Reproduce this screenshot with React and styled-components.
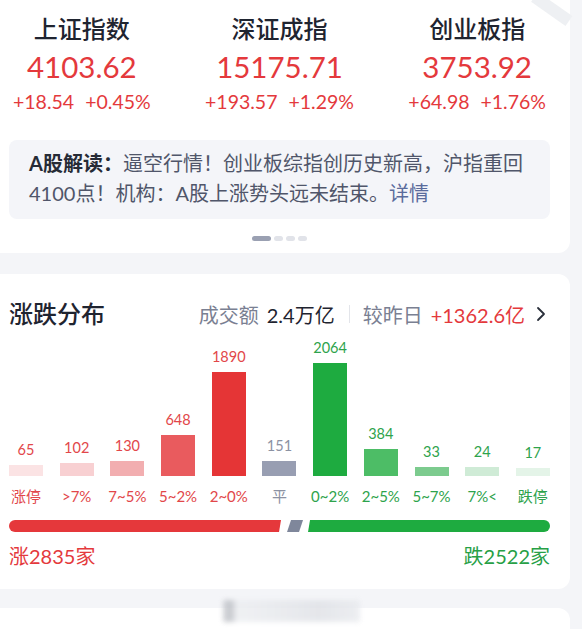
import React from "react";
import styled, { createGlobalStyle } from "styled-components";

const Global = createGlobalStyle`
  html, body { margin: 0; padding: 0; background: #f4f5f8; overflow: hidden; }
  body { font-family: Lato, "Noto Sans CJK SC", sans-serif; }
  #root { width: 582px; }
`;

const Page = styled.div`
  width: 582px;
  height: 629px;
  position: relative;
  overflow: hidden;
  background: #f4f5f8;
`;

const Card = styled.section`
  position: relative;
  background: #ffffff;
  border-radius: 12px;
  margin: ${(p) => p.$mt || "0"} 12px 0 -12px;
  padding: ${(p) => p.$pad};
`;

const IndexRow = styled.div`
  display: flex;
  justify-content: space-between;
  padding: 0 4px;
`;

const IndexCol = styled.div`
  display: flex;
  flex-direction: column;
  align-items: center;
`;

const IndexName = styled.div`
  font-size: 24px;
  line-height: 32px;
  font-weight: 500;
  color: #1f2430;
`;

const IndexValue = styled.div`
  font-size: 29.5px;
  line-height: 36px;
  margin-top: 4px;
  color: #e4393c;
`;

const IndexChg = styled.div`
  display: flex;
  gap: 11px;
  font-size: 19.5px;
  line-height: 24px;
  margin-top: 5px;
  color: #e4393c;
`;

const Brief = styled.div`
  margin-top: 26px;
  background: #f4f5f9;
  border-radius: 8px;
  padding: 8px 20px 11px;
  font-size: 20px;
  line-height: 30px;
  color: #50566a;
`;

const BriefLabel = styled.span`
  font-weight: 700;
  color: #262b36;
`;

const BriefLink = styled.span`
  color: #5a6b9c;
`;

const Dots = styled.div`
  display: flex;
  justify-content: center;
  gap: 3px;
  margin-top: 17px;
`;

const Dot = styled.span`
  display: block;
  height: 5px;
  width: ${(p) => (p.$active ? "19px" : "9px")};
  border-radius: 3px;
  background: ${(p) => (p.$active ? "#9aa0b2" : "#e1e3e9")};
`;

const Header = styled.div`
  display: flex;
  align-items: center;
  justify-content: space-between;
  height: 32px;
`;

const Title = styled.h2`
  margin: 0;
  font-size: 24px;
  line-height: 32px;
  font-weight: 500;
  color: #1f2430;
`;

const Stats = styled.div`
  display: flex;
  align-items: center;
  font-size: 20px;
  color: #7a8092;
`;

const StatValue = styled.span`
  margin-left: 8px;
  color: ${(p) => p.$color || "#1f2430"};
`;

const Divider = styled.span`
  width: 1px;
  height: 18px;
  background: #e3e5ea;
  margin: 0 13px 0 14px;
`;

const Chevron = styled.svg`
  margin-left: 11px;
  margin-right: 4px;
`;

const Chart = styled.div`
  display: flex;
  justify-content: space-between;
  align-items: flex-end;
  margin-top: 8px;
`;

const Col = styled.div`
  width: 34px;
  display: flex;
  flex-direction: column;
  align-items: center;
`;

const ValueLabel = styled.div`
  font-size: 14.5px;
  line-height: 20px;
  margin-bottom: 5px;
  color: ${(p) => p.$color};
  white-space: nowrap;
`;

const Bar = styled.div`
  width: 34px;
  background: ${(p) => p.$color};
`;

const CatLabel = styled.div`
  font-size: 15px;
  line-height: 22px;
  margin-top: 9px;
  color: ${(p) => p.$color};
  white-space: nowrap;
`;

const Ratio = styled.div`
  display: flex;
  align-items: center;
  height: 12px;
  margin-top: 13px;
`;

const RatioUp = styled.div`
  flex: ${(p) => p.$n} 1 0;
  height: 12px;
  background: #e5383b;
  border-radius: 6px 0 0 6px;
  clip-path: polygon(0 0, 100% 0, calc(100% - 2px) 100%, 0 100%);
`;

const RatioFlat = styled.div`
  width: 16px;
  height: 12px;
  margin: 0 5px 0 6px;
  background: #7f879b;
  clip-path: polygon(4px 0, 100% 0, calc(100% - 4px) 100%, 0 100%);
`;

const RatioDown = styled.div`
  flex: ${(p) => p.$n} 1 0;
  height: 12px;
  background: #1eab40;
  border-radius: 0 6px 6px 0;
  clip-path: polygon(2px 0, 100% 0, 100% 100%, 0 100%);
`;

const Totals = styled.div`
  display: flex;
  justify-content: space-between;
  margin-top: 11px;
  font-size: 20px;
  line-height: 26px;
`;

const Total = styled.span`
  color: ${(p) => p.$color};
`;

const Smudge = styled.div`
  position: absolute;
  left: 235px;
  top: -8px;
  width: 137px;
  height: 22px;
  filter: blur(2.5px);
  background: linear-gradient(
    90deg,
    #c9cbd0 0,
    #b9bcc2 8px,
    #eceef1 14px,
    #e6e8ec 40%,
    #dfe1e6 70%,
    #e8eaee 100%
  );
  opacity: 0.8;
`;

const Fold = styled.div`
  position: absolute;
  right: -10px;
  top: 4px;
  width: 42px;
  height: 12px;
  background: #eef0f3;
  transform: rotate(35deg);
  transform-origin: left top;
`;

const indices = [
  { name: "上证指数", value: "4103.62", chg: "+18.54", pct: "+0.45%" },
  { name: "深证成指", value: "15175.71", chg: "+193.57", pct: "+1.29%" },
  { name: "创业板指", value: "3753.92", chg: "+64.98", pct: "+1.76%" },
];

const RED = "#e2474a";
const GRAY = "#8c92a3";
const GREEN = "#2ea34c";

const dist = [
  { v: 65, h: 11, c: "#fbe3e4", l: "涨停", t: RED },
  { v: 102, h: 13, c: "#f8d0d2", l: ">7%", t: RED },
  { v: 130, h: 15, c: "#f2aeb0", l: "7~5%", t: RED },
  { v: 648, h: 41, c: "#e95b5e", l: "5~2%", t: RED },
  { v: 1890, h: 104, c: "#e53536", l: "2~0%", t: RED },
  { v: 151, h: 15, c: "#989eb2", l: "平", t: GRAY },
  { v: 2064, h: 113, c: "#1eab40", l: "0~2%", t: GREEN },
  { v: 384, h: 27, c: "#4dbd66", l: "2~5%", t: GREEN },
  { v: 33, h: 9, c: "#7ccb8e", l: "5~7%", t: GREEN },
  { v: 24, h: 9, c: "#cfebd6", l: "7%<", t: GREEN },
  { v: 17, h: 8, c: "#e4f4e8", l: "跌停", t: GREEN },
];

export default function App() {
  return (
    <Page>
      <Global />
      <Card $mt="-12px" $pad="25px 20px 12px 21px">
        <Fold />
        <IndexRow>
          {indices.map((i) => (
            <IndexCol key={i.name}>
              <IndexName>{i.name}</IndexName>
              <IndexValue>{i.value}</IndexValue>
              <IndexChg>
                <span>{i.chg}</span>
                <span>{i.pct}</span>
              </IndexChg>
            </IndexCol>
          ))}
        </IndexRow>
        <Brief>
          <BriefLabel>A股解读：</BriefLabel>
          逼空行情！创业板综指创历史新高，沪指重回4100点！机构：A股上涨势头远未结束。
          <BriefLink>详情</BriefLink>
        </Brief>
        <Dots>
          <Dot $active />
          <Dot />
          <Dot />
          <Dot />
        </Dots>
      </Card>

      <Card $mt="21px" $pad="24px 20px 20px 21px">
        <Header>
          <Title>涨跌分布</Title>
          <Stats>
            成交额<StatValue>2.4万亿</StatValue>
            <Divider />
            较昨日<StatValue $color="#e4393c">+1362.6亿</StatValue>
            <Chevron width="10" height="16" viewBox="0 0 10 16" fill="none">
              <path d="M2 2 L8 8 L2 14" stroke="#2a2f3a" strokeWidth="1.8" strokeLinecap="round" strokeLinejoin="round" />
            </Chevron>
          </Stats>
        </Header>
        <Chart>
          {dist.map((d) => (
            <Col key={d.l}>
              <ValueLabel $color={d.t}>{d.v}</ValueLabel>
              <Bar $color={d.c} style={{ height: d.h }} />
              <CatLabel $color={d.t}>{d.l}</CatLabel>
            </Col>
          ))}
        </Chart>
        <Ratio>
          <RatioUp $n={2835} />
          <RatioFlat />
          <RatioDown $n={2522} />
        </Ratio>
        <Totals>
          <Total $color="#e4393c">涨2835家</Total>
          <Total $color="#27a046">跌2522家</Total>
        </Totals>
      </Card>

      <Card $mt="19px" $pad="0" style={{ height: 60 }}>
        <Smudge />
      </Card>
    </Page>
  );
}
